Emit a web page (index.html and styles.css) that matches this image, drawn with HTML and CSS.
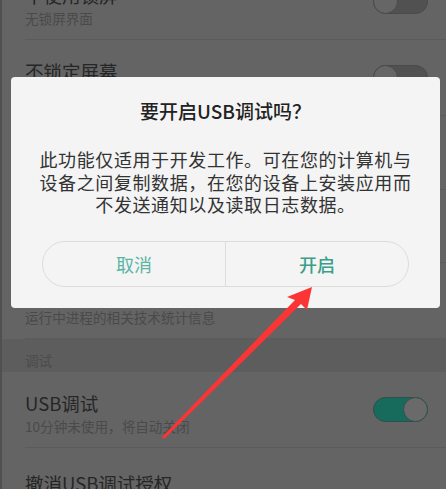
FILE: index.html
```html
<!DOCTYPE html>
<html lang="zh-CN">

<head>
    <meta charset="UTF-8">
    <meta name="viewport" content="width=device-width, initial-scale=1.0">
    <title>开发者选项</title>
    <link rel="stylesheet" href="styles.css">
</head>

<body>
    <div class="screen">
        <div class="list">
            <div class="row">
                <div class="row-text">
                    <div class="row-title">不使用锁屏</div>
                    <div class="row-sub">无锁屏界面</div>
                </div>
                <span class="switch"></span>
            </div>
            <div class="row">
                <div class="row-text">
                    <div class="row-title">不锁定屏幕</div>
                    <div class="row-sub">充电时屏幕不会休眠</div>
                </div>
                <span class="switch"></span>
            </div>
            <div class="row row-single hidden-a">
                <div class="row-title">HDCP 检查</div>
            </div>
            <div class="row row-single hidden-b">
                <div class="row-title">蓝牙 HCI 信息收集日志</div>
            </div>
            <div class="row">
                <div class="row-text">
                    <div class="row-title">正在运行的服务</div>
                    <div class="row-sub">运行中进程的相关技术统计信息</div>
                </div>
                <span class="chevron"></span>
            </div>
            <div class="section">调试</div>
            <div class="row">
                <div class="row-text">
                    <div class="row-title">USB调试</div>
                    <div class="row-sub">10分钟未使用，将自动关闭</div>
                </div>
                <span class="switch on"></span>
            </div>
            <div class="row row-single">
                <div class="row-title">撤消USB调试授权</div>
            </div>
        </div>

        <div class="dialog">
            <div class="dialog-title">要开启USB调试吗？</div>
            <div class="dialog-body">此功能仅适用于开发工作。可在您的计算机与设备之间复制数据，在您的设备上安装应用而不发送通知以及读取日志数据。</div>
            <div class="dialog-buttons">
                <button class="btn btn-cancel">取消</button>
                <button class="btn btn-ok">开启</button>
            </div>
        </div>

        <!-- 红色箭头标注 -->
        <svg class="arrow" width="446" height="489" viewBox="0 0 446 489">
            <polygon fill="#fb3535"
                points="162,437 295,300 287,297 312,287 307,310 301,304 164,439"/>
        </svg>
    </div>
</body>

</html>
```

FILE: styles.css
```css
body {
    margin: 0;
    font-family: "Noto Sans CJK SC", "Noto Sans", sans-serif;
    background-color: #646464;
}

.screen {
    position: relative;
    width: 444px;
    height: 489px;
    overflow: hidden;
    background-color: #646464;
    border-left: 2px solid #505050;
}

.list {
    margin-top: -36px;
}

.row {
    display: flex;
    align-items: center;
    justify-content: space-between;
    height: 76px;
    box-sizing: border-box;
    margin-left: 23px;
    padding-right: 18px;
    border-bottom: 1px solid #5b5b5b;
}

.row-text {
    margin-top: 6px;
}

.row-single {
    height: 60px;
    padding-top: 10px;
    border-bottom: none;
}

.hidden-a {
    height: 74px;
    border-bottom: 1px solid #5b5b5b;
}

.hidden-b {
    height: 73px;
    border-bottom: 1px solid #5b5b5b;
}

.row-title {
    font-size: 18.5px;
    line-height: 26px;
    color: #262626;
}

.row-sub {
    font-size: 13.6px;
    line-height: 20px;
    color: #4a4a4a;
}

.section {
    height: 33px;
    box-sizing: border-box;
    padding: 12px 0 0 23px;
    font-size: 13.6px;
    line-height: 18px;
    color: #4c4c4c;
    background-color: #5d5d5d;
}

/* 开关 */
.switch {
    position: relative;
    width: 55px;
    height: 25px;
    box-sizing: border-box;
    border-radius: 13px;
    background-color: #515151;
    border: 1px solid #4a4a4a;
    flex-shrink: 0;
}

.switch::after {
    content: "";
    position: absolute;
    top: -1px;
    left: -1px;
    width: 25px;
    height: 25px;
    box-sizing: border-box;
    border-radius: 50%;
    background-color: #666;
    border: 1px solid #4a4a4a;
}

.switch.on {
    background-color: #176b5c;
    border-color: #2f4f49;
}

.switch.on::after {
    left: auto;
    right: -1px;
    background-color: #6a6a6a;
    border-color: #34504b;
}

.chevron {
    width: 8px;
    height: 8px;
    margin-right: 4px;
    border-top: 1.5px solid #4a4a4a;
    border-right: 1.5px solid #4a4a4a;
    transform: rotate(45deg);
}

/* 对话框 */
.dialog {
    position: absolute;
    left: 9px;
    top: 77px;
    width: 429px;
    height: 231px;
    box-sizing: border-box;
    padding-top: 22px;
    background-color: #f4f4f4;
    border-radius: 4px;
    text-spacing-trim: space-all;
}

.dialog-title {
    text-align: center;
    font-size: 19px;
    line-height: 24px;
    font-weight: 500;
    color: #222;
}

.dialog-body {
    margin-top: 25px;
    padding: 0 24px;
    text-align: center;
    font-size: 18px;
    line-height: 22.5px;
    letter-spacing: 0.6px;
    color: #333;
}

.dialog-buttons {
    display: flex;
    margin: 25px 31px 0;
    height: 46px;
    box-sizing: border-box;
    border: 1px solid #dcdcdc;
    border-radius: 23px;
    overflow: hidden;
}

.btn {
    flex: 1;
    border: none;
    background: none;
    font-family: inherit;
    font-size: 18px;
    padding: 0;
}

.btn-cancel {
    color: #5bb5a5;
    border-right: 1px solid #dcdcdc;
}

.btn-ok {
    color: #3a9e8a;
    font-weight: 500;
}

.arrow {
    position: absolute;
    left: -2px;
    top: 0;
    pointer-events: none;
}
```
